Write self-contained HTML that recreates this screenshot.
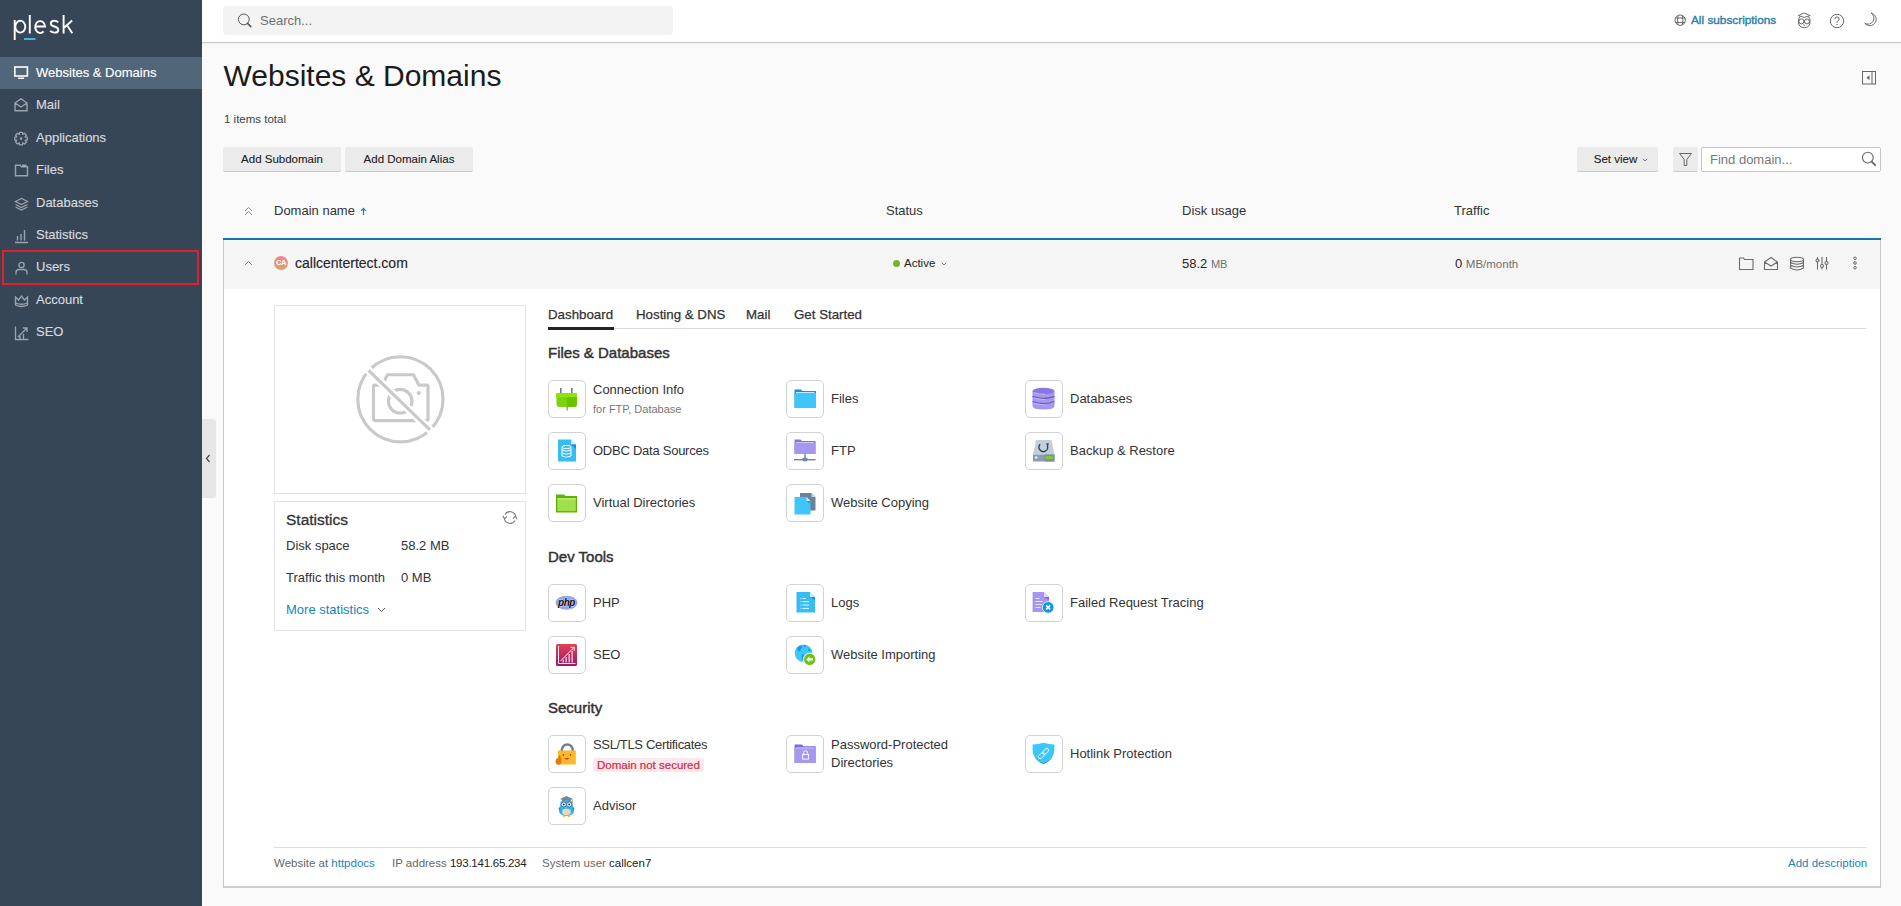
<!DOCTYPE html>
<html><head><meta charset="utf-8">
<style>
*{box-sizing:border-box;margin:0;padding:0}
html,body{width:1901px;height:906px;overflow:hidden;background:#fafafa;font-family:"Liberation Sans",sans-serif;color:#222}
.a{position:absolute;white-space:nowrap}
#side{position:absolute;left:0;top:0;width:202px;height:906px;background:#374657}
.nav{position:absolute;left:0;width:202px;height:32px;color:#d5d9dd;-webkit-text-stroke:0.15px #d5d9dd;font-size:13px;line-height:32px}
.nav span{position:absolute;left:36px;top:0}
.nav svg{position:absolute;left:14px;top:9px}
.nav.act{background:#52667a;color:#fff;-webkit-text-stroke:0.15px #fff}
#hdr{position:absolute;left:202px;top:0;width:1699px;height:43px;background:#fff;border-bottom:1px solid #c9c9cc;box-shadow:0 1px 2px rgba(0,0,0,0.06);z-index:2}
.btn{height:25px;background:#ebebeb;border-bottom:1px solid #c9c9c9;border-radius:2px;font-size:11.5px;line-height:24px;text-align:center;color:#222;-webkit-text-stroke:0.1px #222}
.hd{top:203px;font-size:13px;line-height:16px;color:#333}
.st{font-size:13px;line-height:16px;color:#333}
.tab{top:307px;font-size:13.3px;line-height:16px;color:#333;font-weight:normal;-webkit-text-stroke:0.25px #333}
.sec{font-size:15px;line-height:18px;color:#333;font-weight:normal;-webkit-text-stroke:0.45px #333}
.ft{top:856px;font-size:11.5px;line-height:14px;color:#666}
.ib{position:absolute;width:38px;height:38px;border:1px solid #d2d2d2;border-radius:5px;background:#fff}
.ib svg{position:absolute;left:0;top:0}
.lb{position:absolute;font-size:13px;line-height:16px;color:#333;white-space:nowrap}
.sub{font-size:11px;color:#777}
</style></head><body>
<div id="side">
  <svg class="a" style="left:0;top:0" width="90" height="50" viewBox="0 0 90 50"><g fill="none" stroke="#fff" stroke-width="1.9">
<path d="M14.7 20 V40"/><ellipse cx="20.3" cy="26.7" rx="5" ry="5.9"/>
<path d="M29.8 15 V33.5"/>
<path d="M35.3 26.5 H45.1 A4.95 5.9 0 1 0 43.6 31.3"/>
<path d="M58.2 22.3 Q56.7 20.8 54.3 20.8 Q50.8 20.8 50.8 23.4 Q50.8 25.5 54.4 26.5 Q58.3 27.5 58.3 29.9 Q58.3 32.6 54.5 32.6 Q51.8 32.6 50.2 30.8"/>
<path d="M63.6 15 V33.5"/><path d="M72.2 20.5 L64 27.8 M67 25.2 L72.3 33.2"/>
</g><rect x="24" y="38" width="11.5" height="2" fill="#3fb6dc"/></svg>
  <div class="nav act" style="top:57.0px"><svg width="16" height="14" viewBox="0 0 16 14"><rect x="0.8" y="1" width="12.6" height="9" fill="none" stroke="#fff" stroke-width="1.6"/><rect x="4.1" y="11.5" width="6" height="1.5" fill="#fff"/></svg><span>Websites &amp; Domains</span></div>
  <div class="nav" style="top:89.4px"><svg width="16" height="16" viewBox="0 0 16 16"><path d="M1 5 L7 0.8 L13 5 V12.8 H1 Z M1 5 L7 9 L13 5" fill="none" stroke="#9aa4ae" stroke-width="1.4"/></svg><span>Mail</span></div>
  <div class="nav" style="top:121.8px"><svg width="16" height="16" viewBox="0 0 16 16"><path d="M11.20 5.72 L13.25 6.20 L13.25 9.00 L11.20 9.48 L11.30 9.24 L12.40 11.03 L10.43 13.00 L8.64 11.90 L8.88 11.80 L8.40 13.85 L5.60 13.85 L5.12 11.80 L5.36 11.90 L3.57 13.00 L1.60 11.03 L2.70 9.24 L2.80 9.48 L0.75 9.00 L0.75 6.20 L2.80 5.72 L2.70 5.96 L1.60 4.17 L3.57 2.20 L5.36 3.30 L5.12 3.40 L5.60 1.35 L8.40 1.35 L8.88 3.40 L8.64 3.30 L10.43 2.20 L12.40 4.17 L11.30 5.96 Z" fill="none" stroke="#9aa4ae" stroke-width="1.3" stroke-linejoin="round"/><circle cx="7" cy="7.6" r="1.3" fill="#9aa4ae"/></svg><span>Applications</span></div>
  <div class="nav" style="top:154.2px"><svg width="16" height="16" viewBox="0 0 16 16"><path d="M1.5 2.2 H6 L7.5 3.7 H13.5 V12.8 H1.5 Z M8 2.2 H12.5" fill="none" stroke="#9aa4ae" stroke-width="1.4"/></svg><span>Files</span></div>
  <div class="nav" style="top:186.6px"><svg width="16" height="16" viewBox="0 0 16 16"><path d="M1.5 5.5 L7.5 2.5 L13.5 5.5 L7.5 8.5 Z M1.5 8.5 L7.5 11.5 L13.5 8.5 M1.5 11 L7.5 14 L13.5 11" fill="none" stroke="#9aa4ae" stroke-width="1.3"/></svg><span>Databases</span></div>
  <div class="nav" style="top:219.0px"><svg width="16" height="16" viewBox="0 0 16 16"><path d="M1 14.5 H14 M3.5 12.5 V8 M7 12.5 V6 M10.5 12.5 V2" fill="none" stroke="#9aa4ae" stroke-width="1.4"/></svg><span>Statistics</span></div>
  <div class="nav" style="top:251.4px"><svg width="16" height="16" viewBox="0 0 16 16"><circle cx="7.5" cy="5" r="2.6" fill="none" stroke="#9aa4ae" stroke-width="1.3"/><path d="M2 14.5 V12.5 Q2 9.5 5 9.5 H10 Q13 9.5 13 12.5 V14.5" fill="none" stroke="#9aa4ae" stroke-width="1.3"/></svg><span>Users</span></div>
  <div class="nav" style="top:283.8px"><svg width="16" height="16" viewBox="0 0 16 16"><path d="M1.5 4 L4.5 7 L7.5 3 L10.5 7 L13.5 4 V12 Q7.5 15 1.5 12 Z M1.5 10 Q7.5 12.5 13.5 10" fill="none" stroke="#9aa4ae" stroke-width="1.3"/></svg><span>Account</span></div>
  <div class="nav" style="top:316.2px"><svg width="16" height="16" viewBox="0 0 16 16"><path d="M1.5 1.5 V14.5 H14.5 M4 12 L13 3 M9 3 H13 V7 M6 14 V11 M9.5 14 V9" fill="none" stroke="#9aa4ae" stroke-width="1.3"/></svg><span>SEO</span></div>
  <div class="a" style="left:2px;top:250px;width:197px;height:35px;border:2px solid #e0202a"></div>
</div>
<div id="hdr">
  <div class="a" style="left:21px;top:6px;width:450px;height:29px;background:#f3f3f3;border-radius:4px"></div>
  <svg class="a" style="left:35px;top:13px" width="16" height="16" viewBox="0 0 16 16"><circle cx="6.8" cy="6.4" r="5.4" fill="none" stroke="#555" stroke-width="1"/><path d="M10.6 10.4 L13.8 13.6" stroke="#555" stroke-width="1.5" stroke-linecap="round"/></svg>
  <div class="a" style="left:58px;top:13px;font-size:13px;line-height:15px;color:#6f6f6f">Search...</div>
  <svg class="a" style="left:1472px;top:14px" width="13" height="13" viewBox="0 0 13 13"><g fill="none" stroke="#666" stroke-width="1"><circle cx="6.2" cy="6.2" r="5.2"/><path d="M4 1.6 Q3 6.2 4 10.8 M8.4 1.6 Q9.4 6.2 8.4 10.8 M1.6 4 H10.8 M1.6 8.4 H10.8"/></g></svg>
  <div class="a" style="left:1489px;top:13px;font-size:11.8px;line-height:15px;color:#2b80aa;font-weight:normal;-webkit-text-stroke:0.4px #2b80aa">All subscriptions</div>
  <svg class="a" style="left:1595px;top:11px" width="16" height="18" viewBox="0 0 16 18"><g fill="none" stroke="#6a6a6a" stroke-width="1"><path d="M1.2 4.6 L7.2 2 L13.2 4.6 L7.2 6.4 Z"/><path d="M3 5.6 Q1.3 7.5 1.3 10.2 Q1.3 16.6 7.2 16.6 Q13.1 16.6 13.1 10.2 Q13.1 7.5 11.4 5.6"/><circle cx="4.4" cy="10.4" r="2.5"/><circle cx="10" cy="10.4" r="2.5"/><path d="M6.4 13.8 Q7.2 15.2 8 13.8"/></g><path d="M6.5 9.5 L7.9 9.5 L7.2 12.6 Z" fill="#6a6a6a"/></svg>
  <svg class="a" style="left:1627px;top:13px" width="16" height="16" viewBox="0 0 16 16"><circle cx="8" cy="8" r="6.7" fill="none" stroke="#666" stroke-width="1"/><path d="M5.8 6.2 Q5.8 3.9 8 3.9 Q10.2 3.9 10.2 6 Q10.2 7.3 8.8 7.9 Q8 8.3 8 9.6" fill="none" stroke="#666" stroke-width="1"/><circle cx="8" cy="11.6" r="0.7" fill="#666"/></svg>
  <svg class="a" style="left:1661px;top:12px" width="16" height="16" viewBox="0 0 16 16"><path d="M8 1 A6.4 6.4 0 1 1 1.8 11.3 A5.8 5.8 0 0 0 8 1 Z" fill="none" stroke="#6a6a6a" stroke-width="1"/></svg>
</div>
<div class="a" style="left:223.5px;top:58px;font-size:30px;line-height:36px;color:#1b1b1b">Websites &amp; Domains</div>
<svg class="a" style="left:1862px;top:71px" width="15" height="14" viewBox="0 0 15 14"><rect x="0.5" y="0.5" width="13" height="12.5" fill="none" stroke="#666" stroke-width="1"/><path d="M10 0.5 V13" stroke="#666" stroke-width="1"/><path d="M7.5 4.2 L4.5 6.7 L7.5 9.2 Z" fill="#666"/></svg>
<div class="a" style="left:224px;top:112px;font-size:11.5px;line-height:14px;color:#444">1 items total</div>
<div class="a btn" style="left:223px;top:147px;width:118px">Add Subdomain</div>
<div class="a btn" style="left:345px;top:147px;width:128px">Add Domain Alias</div>
<div class="a btn" style="left:1577px;top:147px;width:81px;padding-right:4px">Set view</div><svg class="a" style="left:1642px;top:158px" width="6" height="4" viewBox="0 0 6 4"><path d="M0.8 0.8 L3 3 L5.2 0.8" fill="none" stroke="#666" stroke-width="0.9"/></svg>
<div class="a btn" style="left:1673px;top:147px;width:25px"></div>
<svg class="a" style="left:1678px;top:152px" width="15" height="15" viewBox="0 0 15 15"><path d="M1.5 1.5 H13.5 L8.8 7.5 V13.5 H6.2 V7.5 Z" fill="none" stroke="#666" stroke-width="1"/></svg>
<div class="a" style="left:1701px;top:147px;width:180px;height:25px;background:#fff;border:1px solid #c5c5c5;border-radius:2px"></div>
<div class="a" style="left:1710px;top:152px;font-size:13px;line-height:15px;color:#777">Find domain...</div>
<svg class="a" style="left:1861px;top:151px" width="16" height="16" viewBox="0 0 16 16"><circle cx="6.8" cy="6.6" r="5.4" fill="none" stroke="#666" stroke-width="1.1"/><path d="M10.6 10.6 L14.2 14.2" stroke="#666" stroke-width="1.8" stroke-linecap="round"/></svg>
<!-- list header -->
<svg class="a" style="left:244px;top:206px" width="9" height="10" viewBox="0 0 9 10"><path d="M1 5 L4.5 1.5 L8 5 M1 9 L4.5 5.5 L8 9" fill="none" stroke="#888" stroke-width="1"/></svg>
<div class="a hd" style="left:274px">Domain name</div><svg class="a" style="left:360px;top:207px" width="7" height="9" viewBox="0 0 7 9"><path d="M3.5 1.3 V8 M1.2 3.8 L3.5 1.3 L5.8 3.8" fill="none" stroke="#1d85b8" stroke-width="1.25"/></svg>
<div class="a hd" style="left:886px">Status</div>
<div class="a hd" style="left:1182px">Disk usage</div>
<div class="a hd" style="left:1454px">Traffic</div>
<div class="a" style="left:223px;top:238px;width:1658px;height:2px;background:#0f78b0"></div>
<!-- card -->
<div class="a" style="left:223px;top:240px;width:1658px;height:648px;background:#fff;border:1px solid #c8c8c8;border-top:0;border-bottom:2px solid #cfcfcf"></div>
<div class="a" style="left:224px;top:240px;width:1656px;height:49px;background:#f5f5f5"></div>
<svg class="a" style="left:244px;top:260px" width="9" height="6" viewBox="0 0 9 6"><path d="M1 5 L4.5 1.5 L8 5" fill="none" stroke="#888" stroke-width="1"/></svg>
<div class="a" style="left:274px;top:256px;width:14px;height:14px;border-radius:50%;background:linear-gradient(#ea8a8e,#d9a46c);color:#fff;font-size:7.5px;font-weight:bold;line-height:14px;text-align:center;letter-spacing:-0.5px">CA</div>
<div class="a" style="left:295px;top:255px;font-size:14px;line-height:16px;color:#262626;-webkit-text-stroke:0.15px #262626">callcentertect.com</div>
<div class="a" style="left:893px;top:260px;width:7px;height:7px;border-radius:50%;background:#7cb22a"></div>
<div class="a" style="left:904px;top:256px;font-size:11.5px;line-height:14px;color:#222">Active</div><svg class="a" style="left:941px;top:262px" width="6" height="4" viewBox="0 0 6 4"><path d="M0.8 0.8 L3 3 L5.2 0.8" fill="none" stroke="#666" stroke-width="0.9"/></svg>
<div class="a" style="left:1182px;top:256px;font-size:13px;line-height:16px;color:#262626">58.2 <span style="font-size:11px;color:#6f6f6f">MB</span></div>
<div class="a" style="left:1455px;top:256px;font-size:13px;line-height:16px;color:#262626">0 <span style="font-size:11.5px;color:#6f6f6f">MB/month</span></div>
<svg class="a" style="left:1738px;top:256px" width="110" height="16" viewBox="0 0 110 16">
 <g fill="none" stroke="#6c6c6c" stroke-width="1.1">
  <path d="M1.5 2 H5.5 L6.5 3.5 H15 V13.5 H1.5 Z"/>
  <path d="M26.5 6 L33 1.5 L39.5 6 V13.5 H26.5 Z M26.5 6 L33 10 L39.5 6"/>
  <ellipse cx="59" cy="3.5" rx="6.5" ry="2.2"/><path d="M52.5 3.5 V12 Q59 16 65.5 12 V3.5 M52.5 6.5 Q59 10 65.5 6.5 M52.5 9.3 Q59 12.8 65.5 9.3"/>
  <path d="M79.5 1 V13.5 M84 1 V13.5 M88.5 1 V13.5"/>
  <circle cx="79.5" cy="4.5" r="1.5" fill="#f5f5f5"/><circle cx="84" cy="10" r="1.5" fill="#f5f5f5"/><circle cx="88.5" cy="7" r="1.5" fill="#f5f5f5"/>
  <circle cx="117" cy="3" r="1"/>
 </g>
</svg>
<svg class="a" style="left:1852px;top:256px" width="6" height="14" viewBox="0 0 6 14"><g fill="none" stroke="#6c6c6c" stroke-width="1"><circle cx="3" cy="2.3" r="1.3"/><circle cx="3" cy="7" r="1.3"/><circle cx="3" cy="11.7" r="1.3"/></g></svg>
<!-- sidebar toggle -->
<div class="a" style="left:202px;top:419px;width:14px;height:79px;background:#e6e6e6;border-radius:0 3px 3px 0"></div>
<svg class="a" style="left:205px;top:454px" width="6" height="9" viewBox="0 0 6 9"><path d="M4.5 1 L1.5 4.5 L4.5 8" fill="none" stroke="#444" stroke-width="1.2"/></svg>
<!-- left panel -->
<div class="a" style="left:274px;top:305px;width:252px;height:189px;border:1px solid #e3e3e3;background:#fff"></div>
<svg class="a" style="left:354px;top:353px" width="92" height="92" viewBox="0 0 92 92"><g fill="none" stroke="#c9c9c9" stroke-width="3.1"><circle cx="46.4" cy="46.3" r="42.6"/><path d="M21 32.1 H28 L33.5 21.7 H59.5 L65 32.1 H72.5 Q74 32.1 74 33.6 V66.1 Q74 67.6 72.5 67.6 H21 Q19.5 67.6 19.5 66.1 V33.6 Q19.5 32.1 21 32.1 Z"/><circle cx="46.2" cy="48.2" r="11.8"/></g><circle cx="64.7" cy="40" r="2.1" fill="#c9c9c9"/><path d="M13 15.8 L77.5 78.3" stroke="#fff" stroke-width="8"/><path d="M14.5 17.3 L76 76.8" stroke="#c9c9c9" stroke-width="3.1"/></svg>
<div class="a" style="left:274px;top:501px;width:252px;height:130px;border:1px solid #e3e3e3;background:#fff"></div>
<div class="a" style="left:286px;top:511px;font-size:15.5px;line-height:17px;font-weight:normal;color:#333;-webkit-text-stroke:0.3px #333">Statistics</div>
<svg class="a" style="left:502px;top:510px" width="16" height="15" viewBox="0 0 16 15"><g fill="none" stroke="#777" stroke-width="1.1"><path d="M2.3 8.5 A5.8 5.8 0 0 0 13 10.5"/><path d="M13.7 6.5 A5.8 5.8 0 0 0 3 4.5"/><path d="M0.8 5.8 L2.6 8.8 L5 6.3"/><path d="M15.2 9.2 L13.4 6.2 L11 8.7"/></g></svg>
<div class="a st" style="left:286px;top:538px">Disk space</div>
<div class="a st" style="left:401px;top:538px">58.2 MB</div>
<div class="a st" style="left:286px;top:570px">Traffic this month</div>
<div class="a st" style="left:401px;top:570px">0 MB</div>
<div class="a st" style="left:286px;top:602px;color:#1785b9">More statistics</div>
<svg class="a" style="left:377px;top:607px" width="9" height="6" viewBox="0 0 9 6"><path d="M1 1 L4.5 4.5 L8 1" fill="none" stroke="#555" stroke-width="1"/></svg>
<!-- tabs -->
<div class="a tab" style="left:548px">Dashboard</div>
<div class="a tab" style="left:636px">Hosting &amp; DNS</div>
<div class="a tab" style="left:746px">Mail</div>
<div class="a tab" style="left:794px">Get Started</div>
<div class="a" style="left:548px;top:328px;width:1318px;height:1px;background:#dcdcdc"></div>
<div class="a" style="left:548px;top:327px;width:66px;height:3px;background:#222"></div>
<div class="a sec" style="left:548px;top:344px">Files &amp; Databases</div>
<div class="a sec" style="left:548px;top:548px">Dev Tools</div>
<div class="a sec" style="left:548px;top:699px">Security</div>
<!-- footer -->
<div class="a" style="left:274px;top:847px;width:1592px;height:1px;background:#dedede"></div>
<div class="a ft" style="left:274px">Website at <span style="color:#1785b9">httpdocs</span></div>
<div class="a ft" style="left:392px">IP address <span style="color:#222;letter-spacing:-0.25px">193.141.65.234</span></div>
<div class="a ft" style="left:542px">System user <span style="color:#222">callcen7</span></div>
<div class="a ft" style="left:1788px;color:#1785b9">Add description</div>
<!-- tools -->
<div class="ib" style="left:548px;top:380px"><svg width="38" height="38" viewBox="0 0 38 38" style="left:-1px;top:-1px"><rect x="12" y="8" width="1.6" height="5.5" fill="#5f7d9c"/><rect x="23" y="8" width="1.6" height="5.5" fill="#5f7d9c"/><path d="M18.3 26.5 L18.9 30.5 L19.8 30.5 L19.5 26.5 Z" fill="#5f7d9c"/><path d="M8.5 16.5 H29 V24 Q29 27 26 27 H11.5 Q8.5 27 8.5 24 Z" fill="#7ad30c"/><path d="M18.8 16.5 H29 V24 Q29 27 26 27 H18.8 Z" fill="#6cc200"/><rect x="8" y="13" width="21" height="4" fill="#8ee600"/></svg></div>
<div class="lb" style="left:593px;top:382px">Connection Info</div>
<div class="lb sub" style="left:593px;top:401px">for FTP, Database</div>
<div class="ib" style="left:786px;top:380px"><svg width="38" height="38" viewBox="0 0 38 38" style="left:-1px;top:-1px"><path d="M8.5 9.5 H15 L16.5 11 H30 V28 H8.5 Z" fill="#1a8fe3"/><path d="M8.5 13 H30 V28 H8.5 Z" fill="#3ec6fb"/><rect x="10" y="12" width="18.5" height="1" fill="#bfeaff"/></svg></div>
<div class="lb" style="left:831px;top:391px">Files</div>
<div class="ib" style="left:1025px;top:380px"><svg width="38" height="38" viewBox="0 0 38 38" style="left:-1px;top:-1px"><path d="M7.5 11 V26 Q7.5 29.5 18.5 29.5 Q29.5 29.5 29.5 26 V11 Z" fill="#a797ef"/><ellipse cx="18.5" cy="11" rx="11" ry="3.3" fill="#8a77e3"/><path d="M7.5 16.3 Q18.5 20.5 29.5 16.3 M7.5 21.5 Q18.5 25.7 29.5 21.5" stroke="#6b58cc" stroke-width="1.3" fill="none"/><path d="M9 18 Q14 19.5 20 19.5 M9 23.3 Q14 24.8 20 24.8 M9 12.8 Q14 14.3 20 14.3" stroke="#c5bbf7" stroke-width="1" fill="none"/></svg></div>
<div class="lb" style="left:1070px;top:391px">Databases</div>
<div class="ib" style="left:548px;top:432px"><svg width="38" height="38" viewBox="0 0 38 38" style="left:-1px;top:-1px"><path d="M10 7.5 H23 L28 12.5 V29.5 H10 Z" fill="#36bdf6"/><path d="M23 7.5 L28 12.5 H23 Z" fill="#d5efff"/><path d="M23 12.5 H28 L23 12.5 Z M28 12.5 L23 12.5 L28 17 Z" fill="#1a8fd8"/><g fill="none" stroke="#fff" stroke-width="1"><ellipse cx="18.5" cy="15" rx="4.5" ry="1.6"/><path d="M14 15 V24 Q18.5 26.5 23 24 V15 M14 18 Q18.5 20.5 23 18 M14 21 Q18.5 23.5 23 21"/></g></svg></div>
<div class="lb" style="left:593px;top:443px;letter-spacing:-0.25px">ODBC Data Sources</div>
<div class="ib" style="left:786px;top:432px"><svg width="38" height="38" viewBox="0 0 38 38" style="left:-1px;top:-1px"><path d="M8.5 7.5 H14.5 L16 9 H29.5 V22 H8.5 Z" fill="#8a74dc"/><path d="M8.5 11 H29.5 V22 H8.5 Z" fill="#a696ec"/><rect x="10" y="10" width="18" height="1" fill="#cdc3f7"/><rect x="18.3" y="22" width="1.4" height="4" fill="#6d87a1"/><rect x="8" y="27" width="21.5" height="1.4" fill="#6d87a1"/><rect x="16.5" y="25.8" width="5" height="3.5" rx="1" fill="#6d87a1"/></svg></div>
<div class="lb" style="left:831px;top:443px">FTP</div>
<div class="ib" style="left:1025px;top:432px"><svg width="38" height="38" viewBox="0 0 38 38" style="left:-1px;top:-1px"><path d="M11 8 H26.5 L29.5 22.5 H8 Z" fill="#c5cedb"/><rect x="8" y="22.5" width="21.5" height="7" fill="#8c9db2"/><rect x="19.5" y="22.5" width="10" height="7" fill="#7d8ea3"/><rect x="20.5" y="24.2" width="7.5" height="2.8" rx="1.3" fill="#7ed321"/><circle cx="11.2" cy="25.6" r="1.3" fill="#d5f2ff"/><path d="M15.2 12.3 A4.3 4.3 0 1 0 22.2 13.4" fill="none" stroke="#2c4458" stroke-width="1.3"/><path d="M20.8 11.6 L23.9 11.3 L23 14.3 Z" fill="#2c4458"/></svg></div>
<div class="lb" style="left:1070px;top:443px">Backup &amp; Restore</div>
<div class="ib" style="left:548px;top:484px"><svg width="38" height="38" viewBox="0 0 38 38" style="left:-1px;top:-1px"><path d="M8 10.5 H16 L17.5 12 H29 V28.5 H8 Z" fill="#5db300"/><rect x="9.3" y="14.3" width="18.5" height="12.8" fill="#a1e04c"/><rect x="9.3" y="14.3" width="18.5" height="1.2" fill="#c3ef8a"/></svg></div>
<div class="lb" style="left:593px;top:495px">Virtual Directories</div>
<div class="ib" style="left:786px;top:484px"><svg width="38" height="38" viewBox="0 0 38 38" style="left:-1px;top:-1px"><path d="M14 9 H25.5 L29.5 13 V26.5 H14 Z" fill="#6b829b"/><path d="M25.5 9 L29.5 13 H25.5 Z" fill="#c9d5e0"/><path d="M8.5 13 H20.5 L24.5 17 V30.5 H8.5 Z" fill="#3ec6fb"/><path d="M20.5 13 L24.5 17 H20.5 Z" fill="#d8f2ff"/><path d="M20.5 17 H24.5 L24.5 20 Z" fill="#1a9ae8"/></svg></div>
<div class="lb" style="left:831px;top:495px">Website Copying</div>
<div class="ib" style="left:548px;top:584px"><svg width="38" height="38" viewBox="0 0 38 38" style="left:-1px;top:-1px"><ellipse cx="18.5" cy="18.7" rx="11" ry="7" fill="#98a3eb"/><text x="18.5" y="21.6" font-family="Liberation Sans" font-weight="bold" font-style="italic" font-size="10" text-anchor="middle" fill="#111" stroke="#fff" stroke-width="0.5" paint-order="stroke" letter-spacing="-0.4">php</text></svg></div>
<div class="lb" style="left:593px;top:595px">PHP</div>
<div class="ib" style="left:786px;top:584px"><svg width="38" height="38" viewBox="0 0 38 38" style="left:-1px;top:-1px"><path d="M10.5 8 H24 L29 13 V28.5 H10.5 Z" fill="#36bdf6"/><path d="M24 8 L29 13 H24 Z" fill="#d5efff"/><path d="M24 13 H29 L29 16 Z" fill="#1a8fd8"/><g fill="#fff"><rect x="14.5" y="14" width="0.9" height="0.9"/><rect x="16.5" y="14" width="3.5" height="0.9"/><rect x="14.5" y="17.3" width="0.9" height="0.9"/><rect x="16.5" y="17.3" width="6.5" height="0.9"/><rect x="14.5" y="20.6" width="0.9" height="0.9"/><rect x="16.5" y="20.6" width="6.5" height="0.9"/><rect x="14.5" y="23.9" width="0.9" height="0.9"/><rect x="16.5" y="23.9" width="6.5" height="0.9"/></g></svg></div>
<div class="lb" style="left:831px;top:595px">Logs</div>
<div class="ib" style="left:1025px;top:584px"><svg width="38" height="38" viewBox="0 0 38 38" style="left:-1px;top:-1px"><path d="M7.6 8 H19 L24 13 V28 H7.6 Z" fill="#a796ed"/><path d="M19 8 L24 13 H19 Z" fill="#e5d7fb"/><path d="M19 13 H24 V16 Z" fill="#7e66dc"/><g fill="#fff" opacity="0.85"><rect x="10.5" y="14" width="4" height="0.9"/><rect x="10.5" y="17" width="7" height="0.9"/><rect x="10.5" y="20" width="6" height="0.9"/><rect x="10.5" y="23" width="5" height="0.9"/></g><circle cx="23.2" cy="23.4" r="5.8" fill="#0d96e8" stroke="#fff" stroke-width="0.8"/><path d="M21.2 21.4 L25.2 25.4 M25.2 21.4 L21.2 25.4" stroke="#fff" stroke-width="1.6"/></svg></div>
<div class="lb" style="left:1070px;top:595px">Failed Request Tracing</div>
<div class="ib" style="left:548px;top:636px"><svg width="38" height="38" viewBox="0 0 38 38" style="left:-1px;top:-1px"><defs><linearGradient id="sg" x1="0" y1="0" x2="0" y2="1"><stop offset="0" stop-color="#e43f57"/><stop offset="1" stop-color="#951a6f"/></linearGradient></defs><rect x="8" y="8" width="21" height="22" rx="1.5" fill="url(#sg)"/><g stroke="#fff" stroke-width="0.9" fill="none"><path d="M10.5 10 V27.5 H27.5"/><path d="M12.5 25 L26 11.5 M22.5 11.3 H26.2 V15"/></g><g fill="#f5cfe0"><rect x="14.5" y="23.5" width="1.3" height="3"/><rect x="17.5" y="21" width="1.3" height="5.5"/><rect x="20.5" y="18" width="1.3" height="8.5"/><rect x="23.5" y="15" width="1.3" height="11.5"/></g></svg></div>
<div class="lb" style="left:593px;top:647px">SEO</div>
<div class="ib" style="left:786px;top:636px"><svg width="38" height="38" viewBox="0 0 38 38" style="left:-1px;top:-1px"><circle cx="17.6" cy="17.2" r="8.8" fill="#3ec6fb"/><path d="M11.2 11.8 Q13 9.3 15.8 9.5 Q16.8 11 15.4 12.3 Q14.2 13.2 14.6 14.6 Q13.6 15.6 12.2 14.6 Q11 13.4 11.2 11.8 Z M17.6 9.2 Q19.6 8.8 20.3 9.8 Q19.4 11.2 18 10.8 Z M22.6 12.4 Q23.8 12.6 24.6 14.2 Q23.5 15.2 22.2 14.6 Q21.8 13.2 22.6 12.4 Z M15.6 18.2 Q17.6 18 18.4 19.6 Q18 22.4 16.6 24.8 Q15.6 22.4 15.6 18.2 Z" fill="#1b96e6"/><circle cx="23.7" cy="23.4" r="6.2" fill="#6fc313" stroke="#fff" stroke-width="1"/><path d="M20.3 23.4 L23.4 20.3 V22.3 H27 V24.5 H23.4 V26.5 Z" fill="#fff"/></svg></div>
<div class="lb" style="left:831px;top:647px">Website Importing</div>
<div class="ib" style="left:548px;top:735px"><svg width="38" height="38" viewBox="0 0 38 38" style="left:-1px;top:-1px"><path d="M13.8 16 V15 A5.5 5.5 0 0 1 24.8 15 V16" fill="none" stroke="#6f8293" stroke-width="2.5"/><rect x="10" y="15.5" width="17.8" height="14" fill="#fcb828"/><circle cx="15.3" cy="20" r="0.8" fill="#4a3a20"/><circle cx="22.5" cy="20" r="0.8" fill="#4a3a20"/><path d="M16.5 23 Q18.9 26.5 21.3 23 Z" fill="#d9363e"/><path d="M7.5 26 Q7.5 23.5 10 23 L11 20.5 Q12.5 20 12.8 22 L13.2 23.5 Q13.8 26 13 28.5 Q12 30 9.5 29.8 Q7.5 29.3 7.5 26 Z" fill="#e8790f"/></svg></div>
<div class="lb" style="left:593px;top:737px;letter-spacing:-0.33px">SSL/TLS Certificates</div>
<div class="a" style="left:593px;top:758px;height:14px;padding:0 4px;background:#fde9eb;border-radius:2px;color:#d02a44;-webkit-text-stroke:0.2px #d02a44;font-size:11.5px;line-height:14px">Domain not secured</div>
<div class="ib" style="left:786px;top:735px"><svg width="38" height="38" viewBox="0 0 38 38" style="left:-1px;top:-1px"><path d="M8.6 9.6 H16 L17.5 11.3 H29.6 V27.9 H8.6 Z" fill="#7c6ade"/><rect x="8.6" y="13" width="21" height="15" fill="#a797ee"/><rect x="10" y="12.3" width="18.5" height="1.2" fill="#c9bff6"/><path d="M17.6 19.5 V17.8 A2 2 0 0 1 21.6 17.8 V19.5" fill="none" stroke="#fff" stroke-width="0.9"/><rect x="16.6" y="19.5" width="6" height="4.6" fill="none" stroke="#fff" stroke-width="0.9"/></svg></div>
<div class="lb" style="left:831px;top:736px;line-height:18px">Password-Protected<br>Directories</div>
<div class="ib" style="left:1025px;top:735px"><svg width="38" height="38" viewBox="0 0 38 38" style="left:-1px;top:-1px"><path d="M7.6 9.5 Q13 9.2 18.5 7.8 Q24 9.2 29.4 9.5 V15 Q29.4 24 18.5 29 Q7.6 24 7.6 15 Z" fill="#3ec6fb"/><path d="M9.5 22 Q12.5 26.8 18.5 29 Q24.5 26.8 27.5 22 Q24 26 18.5 28 Q13 26 9.5 22 Z" fill="#1a9ae8"/><g fill="none" stroke="#fff" stroke-width="0.9" transform="rotate(-45 18.5 18.5)"><rect x="12" y="16.7" width="7" height="3.6" rx="1.8"/><rect x="18" y="16.7" width="7" height="3.6" rx="1.8"/></g></svg></div>
<div class="lb" style="left:1070px;top:746px">Hotlink Protection</div>
<div class="ib" style="left:548px;top:787px"><svg width="38" height="38" viewBox="0 0 38 38" style="left:-1px;top:-1px"><path d="M12 12 L18.5 9 L25 12 L18.5 14.5 Z" fill="#6e87a0"/><path d="M14 12.5 H23 V14 H14 Z" fill="#6e87a0"/><path d="M24.5 12 V16" stroke="#f5a623" stroke-width="0.7"/><path d="M12.5 14.5 Q18.5 12.5 24.5 14.5 L25 21 Q26.5 23 25.5 26 Q23 29 18.5 29 Q14 29 11.5 26 Q10.5 23 12 21 Z" fill="#3ab5f2"/><path d="M10.5 21.5 L12.5 19 V26.5 Z M26.5 21.5 L24.5 19 V26.5 Z" fill="#1c95d8"/><circle cx="15.8" cy="17.5" r="2.5" fill="#fff" stroke="#1f5f86" stroke-width="0.8"/><circle cx="21.2" cy="17.5" r="2.5" fill="#fff" stroke="#1f5f86" stroke-width="0.8"/><circle cx="15.8" cy="17.6" r="1" fill="#333"/><circle cx="21.2" cy="17.6" r="1" fill="#333"/><path d="M17.8 20 H19.2 L18.5 21.5 Z" fill="#f5a623"/><ellipse cx="18.5" cy="25" rx="4.3" ry="3.3" fill="#edd6b3"/><path d="M15 29 H17 M20 29 H22" stroke="#f5a623" stroke-width="1.3"/></svg></div>
<div class="lb" style="left:593px;top:798px">Advisor</div>
</body></html>
